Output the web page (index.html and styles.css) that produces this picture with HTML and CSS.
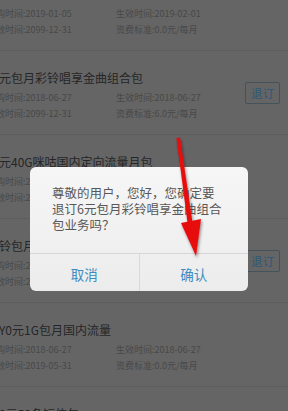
FILE: index.html
```html
<!DOCTYPE html>
<html lang="zh-CN">
<head>
<meta charset="utf-8">
<title>退订</title>
<link rel="stylesheet" href="styles.css">
</head>
<body>
<div class="list">
  <div class="item">
    <div class="info">
      <div class="title">元包月彩铃</div>
      <div class="row"><span class="cell">订购时间:2019-01-05</span><span class="cell">生效时间:2019-02-01</span></div>
      <div class="row"><span class="cell">失效时间:2099-12-31</span><span class="cell">资费标准:0.0元/每月</span></div>
    </div>
  </div>
  <div class="item">
    <div class="info">
      <div class="title">元包月彩铃唱享金曲组合包</div>
      <div class="row"><span class="cell">订购时间:2018-06-27</span><span class="cell">生效时间:2018-06-27</span></div>
      <div class="row"><span class="cell">失效时间:2099-12-31</span><span class="cell">资费标准:6.0元/每月</span></div>
    </div>
    <div class="btn">退订</div>
  </div>
  <div class="item">
    <div class="info">
      <div class="title">元40G咪咕国内定向流量月包</div>
      <div class="row"><span class="cell">订购时间:2018-06-27</span><span class="cell">生效时间:2018-06-27</span></div>
      <div class="row"><span class="cell">失效时间:2099-12-31</span><span class="cell">资费标准:0.0元/每月</span></div>
    </div>
  </div>
  <div class="item">
    <div class="info">
      <div class="title">铃包月</div>
      <div class="row"><span class="cell">订购时间:2018-06-27</span><span class="cell">生效时间:2018-06-27</span></div>
      <div class="row"><span class="cell">失效时间:2099-12-31</span><span class="cell">资费标准:5.0元/每月</span></div>
    </div>
    <div class="btn">退订</div>
  </div>
  <div class="item">
    <div class="info">
      <div class="title">Y0元1G包月国内流量</div>
      <div class="row"><span class="cell">订购时间:2018-06-27</span><span class="cell">生效时间:2018-06-27</span></div>
      <div class="row"><span class="cell">失效时间:2019-05-31</span><span class="cell">资费标准:0.0元/每月</span></div>
    </div>
  </div>
  <div class="item">
    <div class="info">
      <div class="title">0元50条短信包</div>
    </div>
  </div>
</div>

<div class="dialog">
  <div class="msg">尊敬的用户，您好，您确定要<br>退订6元包月彩铃唱享金曲组合<br>包业务吗？</div>
  <div class="actions">
    <div class="action">取消</div>
    <div class="action">确认</div>
  </div>
</div>

<svg class="arrow" width="288" height="411" viewBox="0 0 288 411">
  <defs>
    <filter id="sh" x="-50%" y="-50%" width="200%" height="200%">
      <feDropShadow dx="1" dy="2" stdDeviation="1.5" flood-color="#000" flood-opacity="0.45"/>
    </filter>
  </defs>
  <g filter="url(#sh)">
    <path d="M176.5 138 L180 137.5 L193 226 L188 226.5 Z" fill="#e80b0b"/>
    <path d="M181 223 L201 219 L196 256 Z" fill="#e80b0b"/>
  </g>
</svg>
</body>
</html>
```

FILE: styles.css
```css
html, body {
  margin: 0;
  padding: 0;
  overflow: hidden;
}
body {
  width: 288px;
  height: 411px;
  background: #656565;
  font-family: "Noto Sans CJK SC", "Noto Sans", sans-serif;
  position: relative;
}
.list {
  margin-top: -34px;
  margin-left: -15px;
}
.item {
  height: 83px;
  border-top: 1px solid #5d5d5d;
  display: flex;
  align-items: center;
}
.info {
  flex: 1;
  align-self: flex-start;
}
.title {
  margin-top: 18px;
  height: 18px;
  line-height: 18px;
  font-size: 12px;
  color: #262626;
  white-space: nowrap;
  padding-left: 14px;
}
.row {
  display: flex;
  padding-left: 2px;
  line-height: 16px;
  font-size: 9px;
  color: #484848;
  white-space: nowrap;
}
.title + .row {
  margin-top: 3px;
}
.cell {
  width: 129px;
}
.btn {
  width: 35px;
  height: 20px;
  margin-right: 8px;
  border: 1px solid #45525a;
  border-radius: 2px;
  color: #2d5877;
  font-size: 11.5px;
  line-height: 20px;
  text-align: center;
}
.dialog {
  position: absolute;
  left: 30px;
  top: 167px;
  width: 218px;
  height: 124px;
  background: linear-gradient(#f6f6f6, #ececec);
  border-radius: 6px;
  display: flex;
  flex-direction: column;
}
.msg {
  padding: 18px 0 0 22px;
  height: 86px;
  box-sizing: border-box;
  font-size: 12.5px;
  line-height: 16px;
  color: #585858;
  white-space: nowrap;
}
.actions {
  flex: 1;
  display: flex;
  border-top: 1px solid #d6d6d6;
}
.action {
  flex: 1;
  display: flex;
  align-items: center;
  justify-content: center;
  font-size: 13.5px;
  color: #3b8cc3;
  padding-top: 2px;
}
.action + .action {
  border-left: 1px solid #d9d9d9;
}
.arrow {
  position: absolute;
  left: 0;
  top: 0;
}
```
